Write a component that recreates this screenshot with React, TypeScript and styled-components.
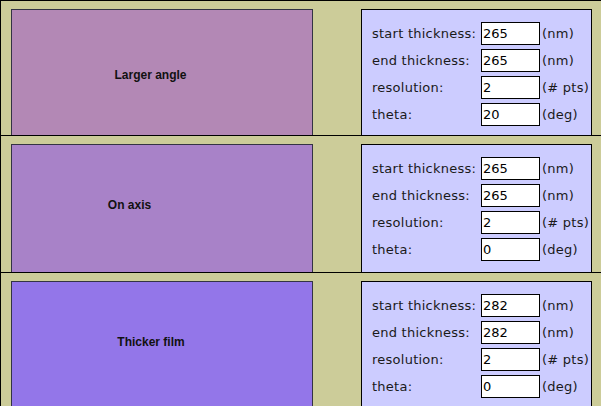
import React from "react";
import styled, { createGlobalStyle } from "styled-components";

const GlobalStyle = createGlobalStyle`
  html, body {
    margin: 0;
    padding: 0;
    background: #cccc99;
    overflow: hidden;
  }
`;

const Frame = styled.div`
  width: 620px;
  border-left: 1px solid #000;
  background: #cccc99;
`;

const Row = styled.div<{ $height?: number }>`
  display: flex;
  align-items: stretch;
  box-sizing: border-box;
  height: ${(p) => (p.$height ? `${p.$height}px` : "auto")};
  min-height: 134px;
  border-top: 1px solid #000;
  padding: 8px 0 0 10px;
  overflow: hidden;
`;

const PlotBox = styled.div<{ $bg: string }>`
  display: flex;
  align-items: center;
  justify-content: center;
  box-sizing: border-box;
  width: 302px;
  flex-shrink: 0;
  background: ${(p) => p.$bg};
  border: 1px solid #333344;
  border-bottom: none;
`;

const Caption = styled.div<{ $padRight: number; $padTop: number; $padBottom: number }>`
  flex: 1;
  align-self: stretch;
  display: flex;
  align-items: center;
  justify-content: center;
  padding: ${(p) => `${p.$padTop}px ${p.$padRight}px ${p.$padBottom}px 0`};
  font-family: "Liberation Sans", Arial, sans-serif;
  font-weight: bold;
  font-size: 12px;
  color: #111;
`;

const Panel = styled.div`
  box-sizing: border-box;
  width: 231px;
  margin-left: 48px;
  flex-shrink: 0;
  background: #ccccff;
  border: 1px solid #000;
  border-bottom: none;
  padding: 12px 0 0 10px;
`;

const Fields = styled.div`
  display: grid;
  grid-template-columns: 107px 59px auto;
  column-gap: 2px;
  row-gap: 4px;
  align-items: center;
  font-family: "DejaVu Sans", Verdana, sans-serif;
  font-size: 13px;
  letter-spacing: 0.25px;
  color: #1a1a1a;
`;

const Label = styled.span`
  white-space: nowrap;
`;

const Unit = styled.span`
  white-space: nowrap;
`;

const Field = styled.input`
  box-sizing: border-box;
  width: 59px;
  height: 23px;
  margin: 0;
  padding: 0 1px;
  border: 1px solid #000;
  background: #fff;
  font-family: "DejaVu Sans", Verdana, sans-serif;
  font-size: 13px;
  color: #000;
  outline: none;
`;

type Setting = { label: string; value: string; unit: string };

type Run = {
  title: string;
  bg: string;
  height?: number;
  padRight: number;
  padTop: number;
  padBottom: number;
  start: string;
  end: string;
  res: string;
  theta: string;
};

const runs: Run[] = [
  { title: "Larger angle", bg: "#b388b5", height: 135, padRight: 23, padTop: 4, padBottom: 0, start: "265", end: "265", res: "2", theta: "20" },
  { title: "On axis", bg: "#a882c8", height: 137, padRight: 65, padTop: 0, padBottom: 8, start: "265", end: "265", res: "2", theta: "0" },
  { title: "Thicker film", bg: "#9376e9", height: 140, padRight: 22, padTop: 0, padBottom: 11, start: "282", end: "282", res: "2", theta: "0" },
];

const SettingsPanel = ({ items }: { items: Setting[] }) => (
  <Panel>
    <Fields>
      {items.map((s) => (
        <React.Fragment key={s.label}>
          <Label>{s.label}</Label>
          <Field type="text" defaultValue={s.value} />
          <Unit>{s.unit}</Unit>
        </React.Fragment>
      ))}
    </Fields>
  </Panel>
);

const App = () => {
  return (
    <>
      <GlobalStyle />
      <Frame>
        {runs.map((r) => (
          <Row key={r.title} $height={r.height}>
            <PlotBox $bg={r.bg}>
              <Caption $padRight={r.padRight} $padTop={r.padTop} $padBottom={r.padBottom}>
                {r.title}
              </Caption>
            </PlotBox>
            <SettingsPanel
              items={[
                { label: "start thickness:", value: r.start, unit: "(nm)" },
                { label: "end thickness:", value: r.end, unit: "(nm)" },
                { label: "resolution:", value: r.res, unit: "(# pts)" },
                { label: "theta:", value: r.theta, unit: "(deg)" },
              ]}
            />
          </Row>
        ))}
      </Frame>
    </>
  );
};

export default App;
